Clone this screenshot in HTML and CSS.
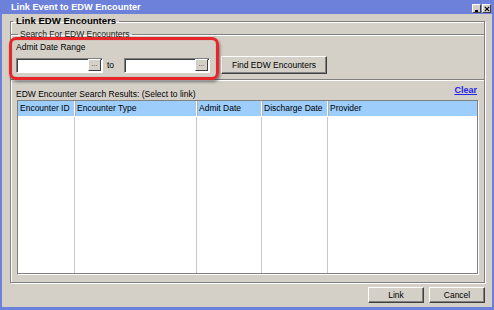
FILE: index.html
```html
<!DOCTYPE html>
<html lang="en">
<head>
    <meta charset="UTF-8">
    <title>Link Event to EDW Encounter</title>
    <link rel="stylesheet" href="styles.css">
</head>
<body>
    <div class="window">
        <div class="titlebar">
            <span class="title">Link Event to EDW Encounter</span>
            <div class="win-btns">
                <span class="win-btn min"></span>
                <span class="win-btn close">
                    <svg width="7" height="7" viewBox="0 0 7 7"><path d="M1 1L6 6M6 1L1 6" stroke="#000" stroke-width="1.3"/></svg>
                </span>
            </div>
        </div>

        <div class="dialog">
            <fieldset class="group">
                <legend class="group-title">Link EDW Encounters</legend>

                <fieldset class="search">
                    <legend>Search For EDW Encounters</legend>
                    <div class="field-label">Admit Date Range</div>
                    <div class="range-row">
                        <div class="date-input"><span class="pick">...</span></div>
                        <span class="to">to</span>
                        <div class="date-input"><span class="pick">...</span></div>
                        <button class="btn find">Find EDW Encounters</button>
                    </div>
                </fieldset>

                <div class="results-head">
                    <span>EDW Encounter Search Results: (Select to link)</span>
                    <a href="#" class="clear">Clear</a>
                </div>

                <div class="grid">
                    <div class="grid-row grid-head">
                        <div class="c1">Encounter ID</div>
                        <div class="c2">Encounter Type</div>
                        <div class="c3">Admit Date</div>
                        <div class="c4">Discharge Date</div>
                        <div class="c5">Provider</div>
                    </div>
                    <div class="grid-row grid-body">
                        <div class="c1"></div>
                        <div class="c2"></div>
                        <div class="c3"></div>
                        <div class="c4"></div>
                        <div class="c5"></div>
                    </div>
                </div>
            </fieldset>

            <div class="actions">
                <button class="btn action">Link</button>
                <button class="btn action">Cancel</button>
            </div>
        </div>

        <!-- callout round the date range -->
        <div class="highlight"></div>
    </div>
</body>
</html>
```

FILE: styles.css
```css
body {
    margin: 0;
    font-family: "Liberation Sans", Arial, sans-serif;
    font-size: 8.5px;
    color: #000;
}
.window {
    width: 494px;
    height: 310px;
    box-sizing: border-box;
    background-color: #6d80da;
    padding: 0 2px 3px 2px;
    display: flex;
    flex-direction: column;
    position: relative;
}
.titlebar {
    height: 14px;
    flex-shrink: 0;
    display: flex;
    align-items: center;
    justify-content: space-between;
    padding: 0 1px 0 9px;
    color: #fff;
    font-weight: bold;
    font-size: 9.2px;
}
.win-btns {
    display: flex;
    gap: 1px;
    padding-top: 3px;
}
.win-btn {
    width: 9px;
    height: 9px;
    box-sizing: border-box;
    background-color: #d4d0c8;
    border: 1px solid;
    border-color: #fff #404040 #404040 #fff;
    display: flex;
    align-items: center;
    justify-content: center;
}
.win-btn.min::after {
    content: "";
    width: 3px;
    height: 2px;
    background-color: #000;
    margin-top: 4px;
    margin-left: -1px;
}
.win-btn svg {
    width: 6px;
    height: 6px;
}
.dialog {
    flex: 1;
    min-height: 0;
    background-color: #d4d0c8;
    display: flex;
    flex-direction: column;
    padding: 0 7px 0 8px;
}
fieldset {
    margin: 0;
    padding: 0;
    min-width: 0;
}
legend {
    padding: 0 2px;
    margin-left: 2px;
}
.group {
    margin-top: 1px;
    border: 1px solid #808080;
    box-shadow: inset 1px 1px 0 #fff, 1px 1px 0 #fff;
    padding: 0 0 8px 0;
    display: flex;
    flex-direction: column;
}
.group-title {
    font-weight: bold;
    font-size: 9.6px;
    line-height: 12px;
    padding: 0 3px;
}
.search {
    margin-top: 2px;
    border: none;
    border-top: 1px solid #808080;
    border-bottom: 1px solid #808080;
    box-shadow: 0 1px 0 #fff, inset 0 1px 0 #fff;
    padding: 3px 0 5px 5px;
}
.search legend {
    line-height: 10px;
    color: #222;
}
.field-label {
    line-height: 10px;
    margin-bottom: 4px;
}
.range-row {
    display: flex;
    align-items: center;
}
.date-input {
    height: 15px;
    box-sizing: border-box;
    background-color: #fff;
    border: 1px solid;
    border-color: #808080 #fff #fff #808080;
    box-shadow: inset 1px 1px 0 #404040;
    display: flex;
    justify-content: flex-end;
    align-items: center;
    padding-right: 1px;
    width: 87px;
}
.date-input + .to + .date-input {
    width: 86px;
}
.pick {
    width: 13px;
    height: 12px;
    box-sizing: border-box;
    background-color: #d4d0c8;
    border: 1px solid;
    border-color: #fff #404040 #404040 #fff;
    font-size: 7px;
    line-height: 7px;
    text-align: center;
    color: #333;
}
.to {
    width: 21px;
    padding-left: 4px;
    box-sizing: border-box;
}
.btn {
    font-family: "Liberation Sans", Arial, sans-serif;
    font-size: 8.5px;
    color: #000;
    background-color: #d4d0c8;
    border: 1px solid;
    border-color: #fff #404040 #404040 #fff;
    box-shadow: inset -1px -1px 0 #808080;
    padding: 0;
}
.find {
    width: 106px;
    height: 18px;
    margin-left: 11px;
}
.results-head {
    display: flex;
    justify-content: space-between;
    align-items: flex-start;
    padding: 0 7px 0 5px;
    height: 20px;
    box-sizing: border-box;
}
.results-head span {
    margin-top: 9px;
    line-height: 10px;
}
.clear {
    color: #2222ee;
    font-weight: bold;
    font-size: 9px;
    line-height: 10px;
    margin-top: 5px;
}
.grid {
    margin: 0 6px 0 6px;
    height: 172px;
    border: 1px solid #808080;
    box-shadow: 1px 1px 0 #fff;
    background-color: #fff;
    display: flex;
    flex-direction: column;
}
.grid-row {
    display: flex;
}
.grid-head {
    height: 15px;
    background-color: #9ccdfb;
    border-bottom: 1px solid #fff;
}
.grid-head div {
    line-height: 15px;
    padding-left: 2px;
    border-right: 1px solid #fff;
    box-shadow: 1px 0 0 #b0b0b0;
    box-sizing: border-box;
}
.grid-body {
    flex: 1;
}
.grid-body div {
    border-right: 1px solid #c8c8c8;
    box-sizing: border-box;
}
.c1 { width: 57px; }
.c2 { width: 122px; }
.c3 { width: 65px; }
.c4 { width: 66px; }
.c5 { flex: 1; border-right: none !important; box-shadow: none !important; }
.actions {
    display: flex;
    justify-content: flex-end;
    gap: 5px;
    padding-top: 4px;
}
.action {
    width: 56px;
    height: 16px;
}
.highlight {
    position: absolute;
    left: 9px;
    top: 37px;
    width: 210px;
    height: 43px;
    box-sizing: border-box;
    border: 3px solid #e8262a;
    border-radius: 7px;
    box-shadow: 1px 2px 3px rgba(0, 0, 0, 0.45), inset 0 0 1px rgba(120, 0, 0, 0.5);
}
```
